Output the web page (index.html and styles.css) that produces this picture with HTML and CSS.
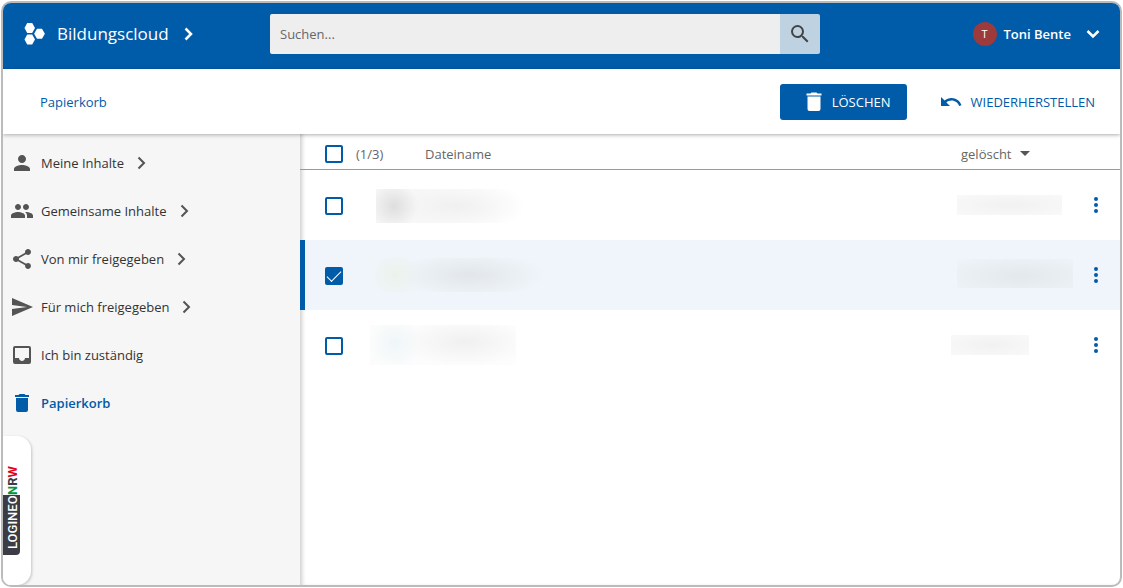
FILE: index.html
```html
<!DOCTYPE html>
<html lang="de">
<head>
<meta charset="utf-8">
<meta name="viewport" content="width=device-width, initial-scale=1">
<title>Bildungscloud – Papierkorb</title>
<link rel="stylesheet" href="styles.css">
</head>
<body>
<div class="app">
  <header class="topbar">
    <a class="brand" href="#">
      <svg class="brand-logo" width="22" height="22" viewBox="0 0 22 22" aria-hidden="true">
        <path d="M3.200 0h5l2.800 5-2.800 5h-5L.5 5zM3.200 11.500h5l2.800 5-2.800 5h-5L.5 16.500zM13 5.800h5l2.900 5-2.900 5h-5l-2.900-5z"/>
      </svg>
      <span>Bildungscloud</span>
      <svg class="chevron brand-chevron" width="9" height="14" viewBox="0 0 9 14" aria-hidden="true"><path d="M1.500 1.500L7 7l-5.500 5.500" stroke-width="2.500"/></svg>
    </a>
    <form class="search" role="search">
      <input class="search-input" type="search" placeholder="Suchen..." aria-label="Suchen">
      <button class="search-button" type="button" aria-label="Suche starten">
        <svg width="24" height="24" viewBox="0 0 24 24" aria-hidden="true"><path d="M15.500 14h-.79l-.28-.27A6.471 6.471 0 0 0 16 9.500 6.500 6.500 0 1 0 9.500 16c1.610 0 3.090-.59 4.230-1.570l.27.28v.79l5 4.990L20.490 19l-4.990-5zm-6 0C7.010 14 5 11.990 5 9.500S7.010 5 9.500 5 14 7.010 14 9.500 11.990 14 9.500 14z"/></svg>
      </button>
    </form>
    <button class="user" type="button">
      <span class="avatar">T</span>
      <span>Toni Bente</span>
      <svg class="chevron user-chevron" width="14" height="10" viewBox="0 0 14 10" aria-hidden="true"><path d="M1.500 2L7 7.500 12.500 2" stroke-width="2.500"/></svg>
    </button>
  </header>

  <div class="actionbar">
    <a class="crumb" href="#">Papierkorb</a>
    <div class="actions">
      <button class="action action-primary" type="button">
        <svg width="24" height="24" viewBox="0 0 24 24" aria-hidden="true"><path d="M5.500 19a2 2 0 0 0 2 2h9a2 2 0 0 0 2-2V6.500h-13zM19.500 3.500h-4l-1-1h-5l-1 1h-4v2h15z"/></svg>
        LÖSCHEN
      </button>
      <button class="action" type="button">
        <svg width="24" height="24" viewBox="0 0 24 24" aria-hidden="true"><path d="M12.500 8c-2.650 0-5.050.99-6.900 2.600L2 7v9h9l-3.620-3.620c1.390-1.160 3.160-1.880 5.120-1.880 3.540 0 6.550 2.310 7.600 5.500l2.370-.78C21.080 11.030 17.150 8 12.500 8z"/></svg>
        WIEDERHERSTELLEN
      </button>
    </div>
  </div>

  <div class="content">
    <nav class="sidebar" aria-label="Bereiche">
      <a class="nav-item" href="#">
        <svg width="24" height="24" viewBox="0 0 24 24" aria-hidden="true"><path d="M12 12c2.210 0 4-1.790 4-4s-1.790-4-4-4-4 1.790-4 4 1.790 4 4 4zm0 2c-2.670 0-8 1.340-8 4v2h16v-2c0-2.660-5.330-4-8-4z"/></svg>
        <span>Meine Inhalte</span>
        <svg class="chevron" width="9" height="14" viewBox="0 0 9 14" aria-hidden="true"><path d="M1.500 1.500L7 7l-5.500 5.500" stroke-width="2"/></svg>
      </a>
      <a class="nav-item" href="#">
        <svg width="24" height="24" viewBox="0 0 24 24" aria-hidden="true"><path d="M16 11c1.660 0 2.990-1.340 2.990-3S17.660 5 16 5s-3 1.340-3 3 1.340 3 3 3zm-8 0c1.660 0 2.990-1.340 2.990-3S9.660 5 8 5 5 6.340 5 8s1.340 3 3 3zm0 2c-2.330 0-7 1.170-7 3.500V19h14v-2.500c0-2.330-4.670-3.500-7-3.500zm8 0c-.29 0-.62.020-.97.050 1.160.84 1.970 1.970 1.970 3.450V19h6v-2.500c0-2.330-4.670-3.500-7-3.500z"/></svg>
        <span>Gemeinsame Inhalte</span>
        <svg class="chevron" width="9" height="14" viewBox="0 0 9 14" aria-hidden="true"><path d="M1.500 1.500L7 7l-5.500 5.500" stroke-width="2"/></svg>
      </a>
      <a class="nav-item" href="#">
        <svg width="24" height="24" viewBox="0 0 24 24" aria-hidden="true"><path d="M18 16.080c-.76 0-1.440.3-1.960.77L8.910 12.700c.05-.23.09-.46.09-.7s-.04-.47-.09-.7l7.050-4.110c.54.5 1.250.81 2.040.81 1.660 0 3-1.340 3-3s-1.340-3-3-3-3 1.340-3 3c0 .24.040.47.09.7L8.040 9.810C7.500 9.310 6.790 9 6 9c-1.660 0-3 1.340-3 3s1.340 3 3 3c.79 0 1.500-.31 2.040-.81l7.120 4.160c-.05.21-.08.430-.08.650 0 1.610 1.310 2.920 2.920 2.920s2.920-1.310 2.920-2.920-1.310-2.920-2.920-2.920z"/></svg>
        <span>Von mir freigegeben</span>
        <svg class="chevron" width="9" height="14" viewBox="0 0 9 14" aria-hidden="true"><path d="M1.500 1.500L7 7l-5.500 5.500" stroke-width="2"/></svg>
      </a>
      <a class="nav-item" href="#">
        <svg width="24" height="24" viewBox="0 0 24 24" aria-hidden="true"><path d="M2.010 21L23 12 2.010 3 2 10l15 2-15 2z"/></svg>
        <span>Für mich freigegeben</span>
        <svg class="chevron" width="9" height="14" viewBox="0 0 9 14" aria-hidden="true"><path d="M1.500 1.500L7 7l-5.500 5.500" stroke-width="2"/></svg>
      </a>
      <a class="nav-item" href="#">
        <svg width="24" height="24" viewBox="0 0 24 24" aria-hidden="true"><path d="M19 3H5a2 2 0 0 0-2 2v14a2 2 0 0 0 2 2h14a2 2 0 0 0 2-2V5a2 2 0 0 0-2-2zm0 12h-4c0 1.660-1.350 3-3 3s-3-1.340-3-3H5V5h14z"/></svg>
        <span>Ich bin zuständig</span>
      </a>
      <a class="nav-item nav-current" href="#" aria-current="page">
        <svg width="24" height="24" viewBox="0 0 24 24" aria-hidden="true"><path d="M6 19a2 2 0 0 0 2 2h8a2 2 0 0 0 2-2V7H6zM19 4h-3.500l-1-1h-5l-1 1H5v2h14z"/></svg>
        <span>Papierkorb</span>
      </a>
    </nav>

    <main class="main">
      <table class="files">
        <colgroup><col class="col-check"><col class="col-count"><col><col class="col-date"><col class="col-menu"></colgroup>
        <thead>
          <tr>
            <th class="cell-check"><input class="check" type="checkbox" id="select-all"></th>
            <th><label for="select-all">(1/3)</label></th>
            <th>Dateiname</th>
            <th><button class="sort" type="button">gelöscht<span class="sort-arrow"></span></button></th>
            <th></th>
          </tr>
        </thead>
        <tbody>
          <tr>
            <td class="cell-check"><input class="check" type="checkbox" aria-label="Datei 1 auswählen"></td>
            <td colspan="2"><div class="redacted name-a"></div></td>
            <td><div class="redacted date-a"></div></td>
            <td class="cell-menu"><button class="more" type="button" aria-label="Optionen"><svg width="6" height="18" viewBox="0 0 6 18" aria-hidden="true"><circle cx="3" cy="3" r="2"/><circle cx="3" cy="9" r="2"/><circle cx="3" cy="15" r="2"/></svg></button></td>
          </tr>
          <tr class="selected">
            <td class="cell-check"><input class="check" type="checkbox" checked aria-label="Datei 2 auswählen"></td>
            <td colspan="2"><div class="redacted name-b"></div></td>
            <td><div class="redacted date-b"></div></td>
            <td class="cell-menu"><button class="more" type="button" aria-label="Optionen"><svg width="6" height="18" viewBox="0 0 6 18" aria-hidden="true"><circle cx="3" cy="3" r="2"/><circle cx="3" cy="9" r="2"/><circle cx="3" cy="15" r="2"/></svg></button></td>
          </tr>
          <tr>
            <td class="cell-check"><input class="check" type="checkbox" aria-label="Datei 3 auswählen"></td>
            <td colspan="2"><div class="redacted name-c"></div></td>
            <td><div class="redacted date-c"></div></td>
            <td class="cell-menu"><button class="more" type="button" aria-label="Optionen"><svg width="6" height="18" viewBox="0 0 6 18" aria-hidden="true"><circle cx="3" cy="3" r="2"/><circle cx="3" cy="9" r="2"/><circle cx="3" cy="15" r="2"/></svg></button></td>
          </tr>
        </tbody>
      </table>
    </main>
  </div>

  <aside class="logineo"><span class="logineo-name">LOGINEO</span><span class="nrw"><span class="nrw-n">N</span>R<span class="nrw-w">W</span></span></aside>
</div>
</body>
</html>
```
FILE: styles.css
```css
:root {
  --blue: #005ba9;
  --grey: #545454;
}

* { box-sizing: border-box; }

body {
  margin: 0;
  padding: 1px;
  background: #fff;
  font: 13px/20px "Open Sans", "Noto Sans", sans-serif;
  color: #333;
}

a { color: inherit; text-decoration: none; }

button {
  margin: 0;
  padding: 0;
  border: 0;
  background: none;
  font: inherit;
  color: inherit;
  cursor: pointer;
}

svg { display: block; flex: none; fill: currentColor; }

.app {
  position: relative;
  display: flex;
  flex-direction: column;
  min-height: calc(100vh - 2px);
  border: 2px solid #bbb;
  border-radius: 10px;
  overflow: hidden;
}

.chevron { fill: none; stroke: currentColor; }

/* Top bar */
.topbar {
  display: grid;
  grid-template-columns: 267px minmax(0, 550px) 1fr;
  align-items: center;
  height: 66px;
  padding-bottom: 4px;
  background: var(--blue);
  color: #fff;
}

.brand {
  display: flex;
  align-items: center;
  gap: 11px;
  padding-left: 21px;
  font-size: 17px;
  font-weight: 500;
}

.brand-chevron { margin-left: 4px; }

.search { display: flex; height: 40px; border-radius: 2px; overflow: hidden; }

.search-input {
  flex: 1;
  min-width: 0;
  padding: 0 10px;
  border: 0;
  background: #eee;
  font: inherit;
  color: #333;
}

.search-input::placeholder { color: #666; opacity: 1; }

.search-button {
  display: grid;
  place-items: center;
  width: 40px;
  background: #bfd2e2;
  color: #444;
}

.user {
  display: flex;
  align-items: center;
  justify-self: end;
  gap: 7px;
  padding-right: 20px;
  font-weight: 600;
}

.avatar {
  width: 24px;
  border-radius: 50%;
  background: #9c3a3c;
  font-size: 11px;
  font-weight: 500;
  line-height: 24px;
  text-align: center;
}

.user-chevron { margin-left: 8px; }

/* Action bar */
.actionbar {
  position: relative;
  z-index: 1;
  display: flex;
  align-items: center;
  justify-content: space-between;
  height: 65px;
  padding: 0 25px 0 37px;
  background: #fff;
  box-shadow: 0 1px 4px rgba(0, 0, 0, .3);
}

.crumb { color: var(--blue); }

.actions { display: flex; gap: 32px; }

.action {
  display: flex;
  align-items: center;
  gap: 6px;
  height: 36px;
  color: var(--blue);
}

.action:last-child { padding-left: 0; gap: 8px; }

.action-primary {
  padding: 0 16px 0 22px;
  border-radius: 3px;
  background: var(--blue);
  color: #fff;
  font-weight: 500;
}

/* Body */
.content { flex: 1; display: flex; }

.sidebar {
  flex: none;
  width: 297px;
  padding-top: 5px;
  background: #f6f6f6;
}

.nav-item {
  display: flex;
  align-items: center;
  height: 48px;
  padding-left: 7px;
  gap: 7px;
}

.nav-item svg { color: var(--grey); }
.nav-item .chevron { margin-left: 6px; }
.nav-current { font-weight: 600; }
.nav-current, .nav-current svg { color: var(--blue); }

.main { flex: 1; min-width: 0; box-shadow: inset 4px 0 4px -2px rgba(0, 0, 0, .2); }

.files {
  width: 100%;
  table-layout: fixed;
  border-collapse: separate;
  border-spacing: 0;
}

.files th, .files td { padding: 0; }

.files th {
  height: 36px;
  padding-top: 4px;
  border-bottom: 1px solid #999;
  font-weight: 400;
  text-align: left;
  color: #666;
}

.files td { height: 70px; }
.files .cell-check { padding-left: 25px; }
.files td.cell-check { padding-top: 2px; }
.files td.cell-menu { padding-left: 7px; }

.col-check { width: 56px; }
.col-count { width: 69px; }
.col-date { width: 125px; }
.col-menu { width: 34px; }

.selected { background: #eff5fa; }
.selected .cell-check { box-shadow: inset 5px 0 var(--blue); }

.check {
  appearance: none;
  display: grid;
  place-items: center;
  width: 18px;
  height: 18px;
  margin: 0;
  border: 2px solid var(--blue);
  border-radius: 2px;
}

.check:checked { background: var(--blue); }

.check:checked::before {
  content: "";
  width: 13px;
  height: 6px;
  margin-bottom: 3px;
  border: solid #fff;
  border-width: 0 0 1px 1px;
  rotate: -45deg;
}

.sort { display: flex; align-items: center; gap: 8px; }

.sort-arrow {
  border: solid transparent;
  border-width: 5px 5px 0;
  border-top-color: #555;
}

.more { display: block; color: var(--blue); }

/* Obscured values */
.redacted { height: 34px; }

.name-a {
  width: 146px;
  margin: 2px 0 0 20px;
  background:
    radial-gradient(circle 24px at 18px 17px, #dedede, transparent),
    radial-gradient(ellipse 70px 24px at 80px 17px, #f0f0f0, transparent),
    linear-gradient(90deg, #f6f6f6, #fff);
}

.name-b {
  width: 180px;
  margin-left: 14px;
  background:
    radial-gradient(circle 24px at 25px 17px, #ecf2ea, transparent),
    radial-gradient(ellipse 75px 24px at 100px 17px, #e2e6ea, transparent);
}

.name-c {
  width: 146px;
  height: 40px;
  margin-left: 14px;
  background:
    radial-gradient(circle 26px at 25px 18px, #eff6f7, transparent),
    radial-gradient(ellipse 65px 24px at 95px 17px, #f0f0f0, transparent),
    linear-gradient(90deg, #fcfcfc, #fdfdfd);
}

.date-a, .date-c { height: 20px; background: radial-gradient(ellipse, #f1f1f1, #f9f9f9); }
.date-a { width: 105px; margin-left: -4px; }
.date-b { width: 116px; height: 29px; margin: -4px 0 0 -4px; background: radial-gradient(ellipse at 55% 60%, #e3e8ec, #eef4f9); }
.date-c { width: 78px; margin-left: -10px; }

/* Portal tab at the window edge, read from bottom to top */
.logineo {
  position: absolute;
  left: 0;
  bottom: 0;
  z-index: 2;
  display: flex;
  align-items: flex-start;
  width: 28px;
  height: 149px;
  padding: 30px 0;
  border-radius: 14px 0 0 14px;
  background: #fff;
  box-shadow: -1px -1px 3px rgba(0, 0, 0, .2);
  writing-mode: vertical-rl;
  rotate: 180deg;
  font: 500 13px/15px Roboto, sans-serif;
  color: #3c3c46;
}

.logineo-name, .nrw { padding-right: 2px; }

.logineo-name {
  padding-top: 6px;
  border-radius: 4px 0 0;
  background: #3c3c46;
  color: #fff;
}

.nrw { font-weight: 700; }
.nrw-n { color: #009640; }
.nrw-w { color: #e3001b; }
```
